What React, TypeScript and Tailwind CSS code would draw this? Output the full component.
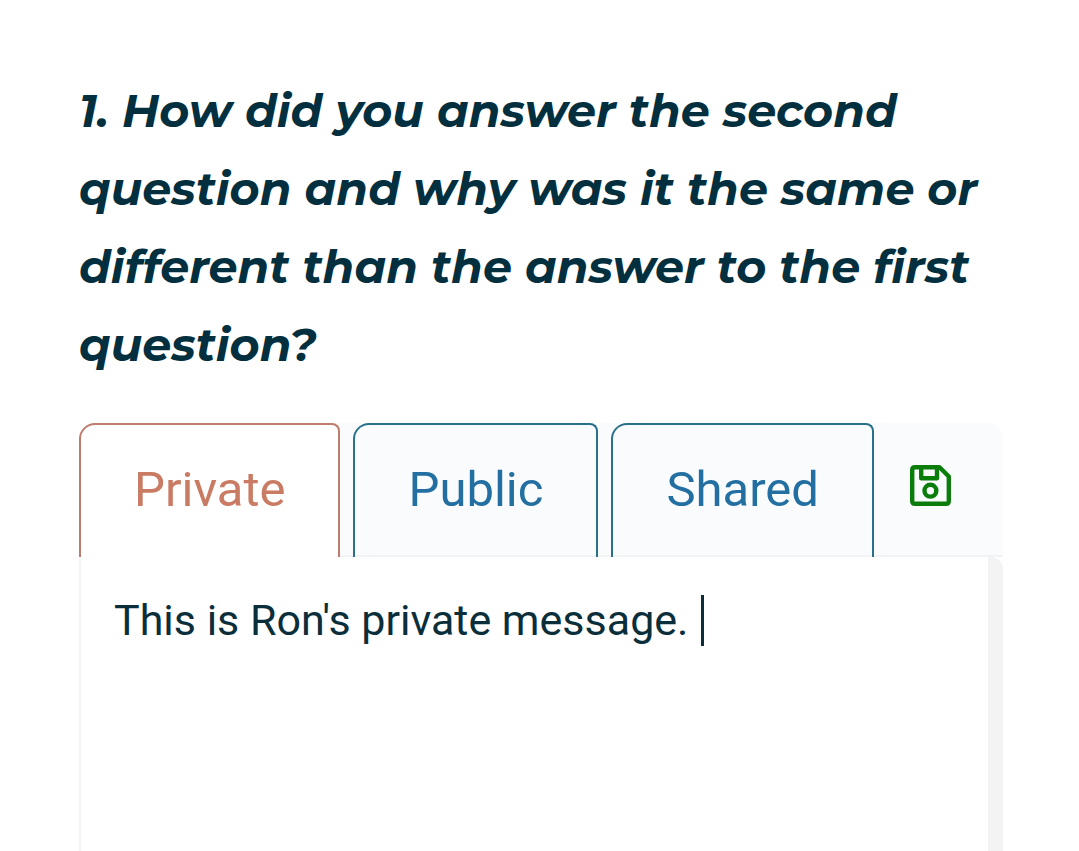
import { useState } from 'react';

type TabKey = 'private' | 'public' | 'shared';

const tabs: { key: TabKey; label: string }[] = [
  { key: 'private', label: 'Private' },
  { key: 'public', label: 'Public' },
  { key: 'shared', label: 'Shared' },
];

function SaveIcon() {
  return (
    <svg viewBox="0 0 41 41" className="size-[41px]" fill="none" stroke="#0b7d0b" strokeWidth="4.4" aria-hidden="true">
      <path
        d="M5 2.200H29.500L38.800 11.500V36Q38.800 38.800 36 38.800H5Q2.200 38.800 2.200 36V5Q2.200 2.200 5 2.200Z"
        strokeLinejoin="round"
      />
      <path d="M11.200 2.200V13.200H27V2.200" strokeLinejoin="round" />
      <circle cx="20.400" cy="25.700" r="5.900" />
    </svg>
  );
}

export default function App() {
  const [active, setActive] = useState<TabKey>('private');
  const [messages, setMessages] = useState<Record<TabKey, string>>({
    private: "This is Ron's private message. ",
    public: '',
    shared: '',
  });
  const [typing, setTyping] = useState(false);

  return (
    <main className="flex h-screen flex-col overflow-hidden bg-white pt-[72px] pr-[76px] pl-[79px]">
      <h1
        id="question"
        className="font-['Montserrat','Inter',sans-serif] text-[46px] leading-[78px] font-bold text-[#042f3e] italic"
      >
        1. How did you answer the second
        <br />
        question and why was it the same or
        <br />
        different than the answer to the first
        <br />
        question?
      </h1>

      <section className="mt-[39px] flex min-h-0 flex-1 flex-col font-['Roboto',sans-serif]">
        {/* Tabs */}
        <div className="flex h-[134px] shrink-0 rounded-t-2xl border-b-2 border-[#f2f3f4] bg-[#f9fbfd]">
          <div role="tablist" aria-label="Message visibility" className="-mb-0.5 flex gap-[13px]">
            {tabs.map(({ key, label }) => (
              <button
                key={key}
                type="button"
                role="tab"
                aria-selected={active === key}
                onClick={() => setActive(key)}
                className={`rounded-tl-2xl rounded-tr-lg border-2 border-b-0 px-[53px] pb-0.5 text-[49px] ${
                  active === key
                    ? 'border-[#bf7b6b] bg-white text-[#c97b64]'
                    : 'border-[#2b708b] text-[#236fa1]'
                }`}
              >
                {label}
              </button>
            ))}
          </div>
          <button type="button" aria-label="Save" className="mb-2 ml-9">
            <SaveIcon />
          </button>
        </div>

        {/* Message */}
        <div className="relative flex min-h-0 flex-1 rounded-tr-xl border-l-2 border-[#f4f4f4]">
          <textarea
            aria-labelledby="question"
            value={messages[active]}
            onChange={(e) => setMessages({ ...messages, [active]: e.target.value })}
            onFocus={() => setTyping(true)}
            className="min-w-0 flex-1 resize-none px-[33px] pt-[37px] text-[43px] leading-[52px] text-[#0b2e3b] outline-none"
          />
          {!typing && (
            <span aria-hidden="true" className="absolute top-[38px] left-[620px] h-[51px] w-[3px] bg-[#0b2e3b]" />
          )}
          <div className="w-[15px] rounded-tr-xl bg-[#f3f3f3]" />
        </div>
      </section>
    </main>
  );
}
